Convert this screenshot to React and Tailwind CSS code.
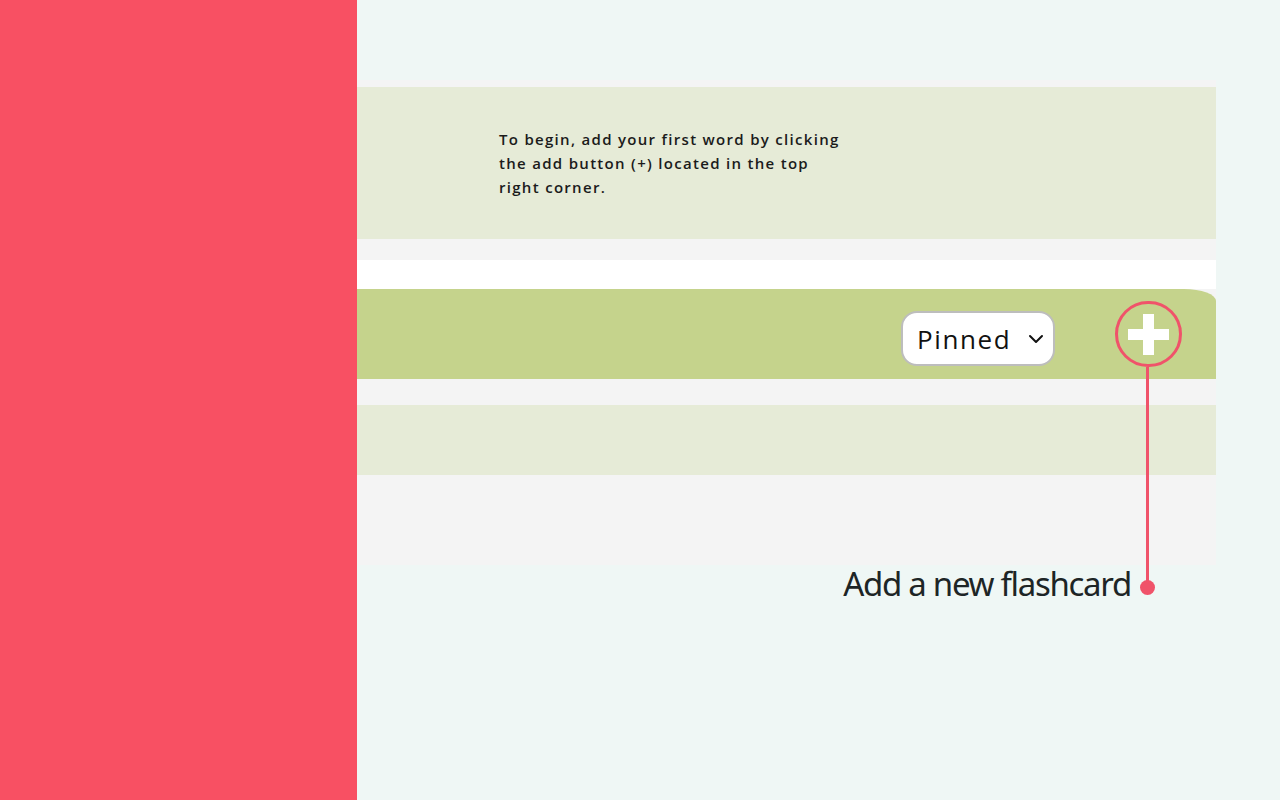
import React from "react";

export default function App() {
  return (
    <div className="flex h-[800px] w-[1280px] overflow-hidden bg-[#eff7f5]" style={{ fontFamily: '"Open Sans", "Noto Sans", sans-serif' }}>
      <aside className="h-full w-[357px] shrink-0 bg-[#f85063]" />
      <main className="flex-1 pt-[80px]">
        <div className="relative w-[859px] bg-[#f4f4f4]">
          <div className="h-[7px]" />
          <section className="h-[152px] bg-[#e6ebd7] pl-[142px] pt-[40px]">
            <p className="w-[352px] text-[15px] font-semibold leading-[24px] tracking-[1.3px] text-[#1b1b1b]">
              To begin, add your first word by clicking the add button (+) located in the top right corner.
            </p>
          </section>
          <div className="h-[21px]" />
          <div className="h-[29px] bg-white" />
          <div className="flex h-[90px] items-start justify-end rounded-tr-[32px_12px] bg-[#c5d38c] pr-[34px]">
            <button className="mt-[22px] flex h-[55px] w-[154px] items-center rounded-[16px] border-2 border-[#bdbdbd] bg-white pl-[14px]">
              <span className="text-[26px] leading-none tracking-[1.6px] text-[#111]">Pinned</span>
              <svg className="ml-auto mr-[7px]" width="20" height="20" viewBox="0 0 20 20" fill="none">
                <path d="M4 7l6 6 6-6" stroke="#111" strokeWidth="2" strokeLinecap="round" strokeLinejoin="round" />
              </svg>
            </button>
            <div className="relative ml-[60px] mt-[12px] flex h-[66px] w-[67px] items-center justify-center rounded-full border-[3px] border-[#f0536a]">
              <svg width="41" height="41" viewBox="0 0 41 41">
                <rect x="15" y="0" width="11" height="41" fill="#fff" />
                <rect x="0" y="15" width="41" height="11" fill="#fff" />
              </svg>
              <div className="absolute left-[28px] top-[63px] h-[219px] w-[3px] bg-[#f0536a]" />
              <div className="absolute left-[22px] top-[276px] h-[15px] w-[15px] rounded-full bg-[#f0536a]" />
              <div
                className="absolute right-[48px] top-[263px] whitespace-nowrap text-[33px] leading-none tracking-[-1.3px] text-[#1d2526]"
                style={{ fontFamily: '"Noto Sans", sans-serif' }}
              >
                Add a new flashcard
              </div>
            </div>
          </div>
          <div className="h-[26px]" />
          <div className="h-[70px] bg-[#e6ebd7]" />
          <div className="h-[90px]" />
        </div>
      </main>
    </div>
  );
}
